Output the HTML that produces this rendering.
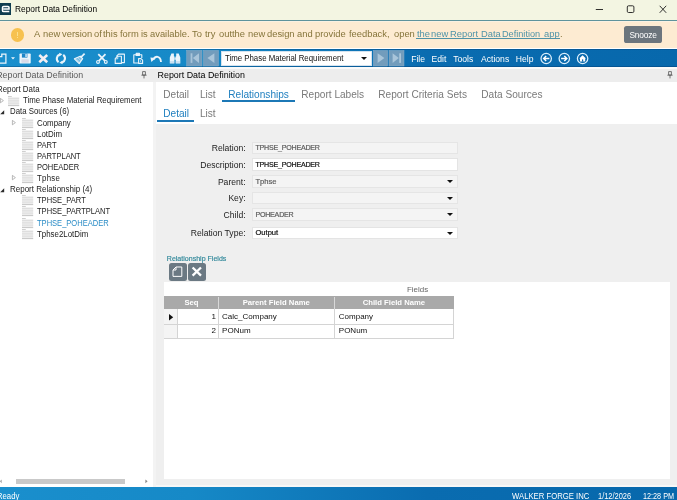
<!DOCTYPE html>
<html><head><meta charset="utf-8"><title>Report Data Definition</title>
<style>
*{box-sizing:border-box;margin:0;padding:0}
html,body{width:677px;height:500px;overflow:hidden;background:#efefef;font-family:"Liberation Sans",sans-serif;color:#222}
.a{position:absolute;white-space:nowrap}
svg{position:absolute;overflow:visible}
#titlebar{left:0;top:0;width:677px;height:20px;background:#f3f5e2}
#tline{left:0;top:20px;width:677px;height:1px;background:#5f939c}
#banner{left:0;top:21px;width:677px;height:27px;background:#fdebd2;border-top:1px solid #fbf1e2}
#toolbar{left:0;top:48.7px;width:677px;height:18.5px;background:linear-gradient(90deg,#1a8fcd 0%,#1689c7 28%,#0a6cb0 63%,#0768ac 100%)}
#status{left:0;top:487.4px;width:677px;height:12.6px;background:linear-gradient(90deg,#1a8fcd 0%,#1689c7 28%,#0a6cb0 63%,#0768ac 100%)}
.tt{font-size:8.33px;line-height:10px;color:#111}
.bn{font-size:9.7px;line-height:12px;color:#85743a;transform:scaleX(.966);transform-origin:0 50%}
.bn.lk{color:#4f93a8}
.mn{font-size:8.6px;line-height:10px;color:#fff}
.tr{font-size:7.85px;line-height:10px;color:#222}
.tab{font-size:10.1px;line-height:12px;color:#7a7a7a}
.tab.on{color:#1f7fbf}
.ul{background:#1c78b6;height:2.1px}
.lb{font-size:8.6px;line-height:10px;color:#222;text-align:right;width:90px;left:155.6px}
.fd{left:252px;width:206px;height:12.8px;border:1px solid #e5e5e5;background:#f4f4f4;-webkit-text-stroke:.2px;font-size:7.6px;line-height:10.8px;padding-left:2.4px;padding-top:.8px;color:#5c5c5c}
.fd.w{background:#fff;color:#111;border-color:#e4e4e4}
.dd{width:0;height:0;border-left:3.2px solid transparent;border-right:3.2px solid transparent;border-top:3.3px solid #111}
.gh{top:296.2px;height:12.5px;background:#a9a9a9;color:#fff;font-weight:bold;font-size:7.7px;line-height:13px;text-align:center}
.gc{font-size:8px;line-height:14px;color:#111}
</style></head><body><div id="root" style="position:absolute;left:0;top:0;width:677px;height:500px;will-change:transform">
<!-- title bar -->
<div class="a" id="titlebar"></div>
<div class="a" style="left:0;top:3.4px;width:10.9px;height:11.2px;background:#0f3d50"></div>
<svg style="left:0;top:3px" width="11" height="11.5" viewBox="0 0 11 11.5"><path d="M3.4 6.1H9V4.4Q9 3.4 8 3.4H3.6Q2.5 3.4 2.5 4.5V7.5Q2.5 8.6 3.6 8.6H9.3" fill="none" stroke="#fff" stroke-width="1.5"/></svg>
<div class="a tt" style="left:14.5px;top:4.2px;font-size:9.3px;transform:scaleX(.898);transform-origin:0 0;color:#000">Report Data Definition</div>
<svg style="left:595px;top:4px" width="75" height="11" viewBox="0 0 75 11"><g fill="none" stroke="#1b1b1b" stroke-width="0.9"><path d="M0.8 5.5H8"/><rect x="32.3" y="1.8" width="6.6" height="6.7" rx="1.2"/><path d="M64.7 1.8L71.2 8.8M71.2 1.8L64.7 8.8"/></g></svg>
<div class="a" id="tline"></div>
<!-- banner -->
<div class="a" id="banner"></div>
<div class="a" style="left:10.5px;top:27.8px;width:13.8px;height:13.8px;border-radius:50%;background:#f7c14f"></div>
<div class="a" style="left:16.7px;top:31.6px;width:1.4px;height:4.4px;background:#fbe08e"></div>
<div class="a" style="left:16.7px;top:36.9px;width:1.4px;height:1.3px;background:#fbe08e"></div>
<span class="a bn" style="left:34.4px;top:28.3px">A</span>
<span class="a bn" style="left:42.7px;top:28.3px">new</span>
<span class="a bn" style="left:61.6px;top:28.3px">version</span>
<span class="a bn" style="left:94.4px;top:28.3px">of</span>
<span class="a bn" style="left:103.3px;top:28.3px">this</span>
<span class="a bn" style="left:120.1px;top:28.3px">form</span>
<span class="a bn" style="left:140.8px;top:28.3px">is</span>
<span class="a bn" style="left:149.6px;top:28.3px">available.</span>
<span class="a bn" style="left:192.2px;top:28.3px">To</span>
<span class="a bn" style="left:205.4px;top:28.3px">try</span>
<span class="a bn" style="left:218.5px;top:28.3px">out</span>
<span class="a bn" style="left:232.4px;top:28.3px">the</span>
<span class="a bn" style="left:248.1px;top:28.3px">new</span>
<span class="a bn" style="left:267.3px;top:28.3px">design</span>
<span class="a bn" style="left:297.4px;top:28.3px">and</span>
<span class="a bn" style="left:315.1px;top:28.3px">provide</span>
<span class="a bn" style="left:349.1px;top:28.3px">feedback,</span>
<span class="a bn" style="left:393.7px;top:28.3px">open</span>
<span class="a bn lk" style="left:416.6px;top:28.3px">the</span>
<span class="a bn lk" style="left:430.8px;top:28.3px">new</span>
<span class="a bn lk" style="left:450.4px;top:28.3px">Report</span>
<span class="a bn lk" style="left:481.0px;top:28.3px">Data</span>
<span class="a bn lk" style="left:501.8px;top:28.3px;transform:scaleX(.945)">Definition</span>
<span class="a bn lk" style="left:543.8px;top:28.3px">app</span>
<span class="a bn" style="left:559.9px;top:28.3px">.</span>
<div class="a" style="left:416.1px;top:38.1px;width:143.6px;height:.8px;background:#4f93a8"></div>
<div class="a" style="left:624px;top:26px;width:38px;height:16.8px;border-radius:2.6px;background:#6c757d"></div>
<div class="a" style="left:624px;top:29.6px;width:38px;color:#fff;font-size:8.4px;line-height:10px;text-align:center;letter-spacing:-.2px">Snooze</div>
<div class="a" style="left:0;top:48px;width:677px;height:.7px;background:#fff"></div>
<!-- toolbar -->
<div class="a" id="toolbar"></div>
<div class="a" style="left:0;top:48.7px;width:677px;height:.8px;background:rgba(0,40,90,.25)"></div>
<div class="a" style="left:0;top:66.4px;width:677px;height:.8px;background:rgba(0,40,90,.3)"></div>
<svg id="tbicons" style="left:0;top:0" width="677" height="500" viewBox="0 0 677 500">
<path d="M-1 56.7H1.8V54.2H5.9V63H-1" fill="none" stroke="#eaf4fb" stroke-width="1.25"/>
<path d="M11 57.2H15L13 59.4z" fill="#eaf4fb"/>
<path d="M20.3 53.5H29.9Q30.7 53.5 30.7 54.3V62.7Q30.7 63.5 29.9 63.5H20.3Q19.5 63.5 19.5 62.7V54.3Q19.5 53.5 20.3 53.5z" fill="#eaf4fb"/>
<rect x="21.9" y="53.5" width="5.5" height="4.1" fill="#1d86c7"/><rect x="25.4" y="54" width="1.3" height="3" fill="#eaf4fb"/><rect x="21.5" y="59.3" width="7.2" height="3.4" fill="#cfdcec"/><path d="M21.5 60.6H28.7M21.5 61.8H28.7" stroke="#e9d9e2" stroke-width=".5"/>
<path d="M39.3 55L47.2 62.3M47.2 55L39.3 62.3" stroke="#f3eef3" stroke-width="2.6" fill="none"/>
<g fill="none" stroke="#eaf4fb" stroke-width="2.1"><path d="M59.8 54.5A4.4 4.4 0 0 0 58.6 62.2"/><path d="M62 62.5A4.4 4.4 0 0 0 63.2 54.8"/></g>
<path d="M59.2 52.8L62.4 54.3L59.4 56.6z" fill="#eaf4fb"/><path d="M62.6 64.2L59.4 62.7L62.4 60.4z" fill="#eaf4fb"/>
<g stroke="#eaf4fb" fill="none" stroke-linejoin="round"><path d="M84.6 53.6L80.6 57.6" stroke-width="1.7"/><path d="M80.2 56.2L82.6 58.6L79.2 63.6L74.4 58.8z" stroke-width="1.2" fill="rgba(234,244,251,.45)"/><path d="M76.4 59.2L79.6 62.2M78 57.8L81 60.6" stroke-width=".6"/></g>
<g stroke="#eaf4fb" fill="none" stroke-width="1.8"><path d="M98.3 54.2L104.9 60.8M105.5 54.2L98.9 60.8"/><circle cx="98" cy="61.9" r="1.4" stroke-width="1.15"/><circle cx="105.8" cy="61.9" r="1.4" stroke-width="1.15"/></g>
<g stroke="#eaf4fb" fill="none" stroke-width="1.1" stroke-linejoin="round"><path d="M116.4 56.4L118.6 54.1H124.4V62.6H122"/><path d="M115.2 58.6L117.6 56.2H121.4V63.4H115.2z"/><path d="M117.8 56.4V58.8H115.4" stroke-width=".8"/></g>
<g stroke="#eaf4fb" fill="none" stroke-width="1.1" stroke-linejoin="round"><path d="M138 63H133.8V54.8H141.8V58"/><rect x="136.2" y="53.2" width="3.2" height="2.2" fill="#eaf4fb"/><path d="M138.6 58.6H141L142.6 60.2V63.4H138.6z"/><path d="M140.6 60.2V62" stroke-width=".7"/></g>
<path d="M153.4 59.6C155.4 55.6 160.4 55.6 161 62" stroke="#eaf4fb" stroke-width="1.9" fill="none"/><path d="M150.4 57.6L155.6 58L151.4 62z" fill="#eaf4fb"/>
<g fill="#eaf4fb"><path d="M171.4 53.5H173.9V56.2H174.4V63.4H169.8V57.6z"/><path d="M176.2 53.5H178.7L180.3 57.6V63.4H175.7V56.2H176.2z"/><rect x="174.4" y="57.4" width="1.4" height="2.4"/></g>
<path d="M169.8 62H180.3" stroke="#7fb6dc" stroke-width=".6"/>
<g fill="#729cbc" stroke="#86acc8" stroke-width=".5"><rect x="186.6" y="50.4" width="15.4" height="15.6"/><rect x="203.4" y="50.4" width="15.2" height="15.6"/><rect x="373.3" y="50.4" width="14.4" height="15.6"/><rect x="389" y="50.4" width="15" height="15.6"/></g>
<g fill="#a9c5da"><rect x="190.6" y="53.3" width="1.8" height="9.6"/><path d="M199 53.3V62.9L192.8 58.1z"/><path d="M214.4 53.3V62.9L207.4 58.1z"/><path d="M377.6 53.3V62.9L384.4 58.1z"/><path d="M392.6 53.3V62.9L398.8 58.1z"/><rect x="399.2" y="53.3" width="1.8" height="9.6"/></g>
<g fill="none" stroke="#d9eefc" stroke-width="1.25"><circle cx="546.2" cy="58.5" r="5.2"/><circle cx="564.3" cy="58.5" r="5.2"/><circle cx="582.6" cy="58.5" r="5.2"/></g>
<g fill="none" stroke="#fff" stroke-width="1.4"><path d="M549.4 58.5H543.8M546.2 55.9L543.6 58.5L546.2 61.1"/><path d="M561.1 58.5H566.7M564.3 55.9L566.9 58.5L564.3 61.1"/></g>
<path d="M579.2 58.6L582.6 55.2L586 58.6H585.2V61.6H580V58.6z" fill="#fff"/><rect x="582" y="59.4" width="1.2" height="2.2" fill="#0e66aa"/>
</svg>
<div class="a" style="left:220.7px;top:51px;width:150.9px;height:15px;background:#fff;border:1px solid #d5e3ef"></div>
<div class="a tr" style="left:225.4px;top:53.4px;color:#111;font-size:8.4px;transform:scaleX(.935);transform-origin:0 50%">Time Phase Material Requirement</div>
<div class="a dd" style="left:361.2px;top:56.8px"></div>
<div class="a mn" style="left:411.2px;top:54.4px">File</div>
<div class="a mn" style="left:431.6px;top:54.4px">Edit</div>
<div class="a mn" style="left:453.2px;top:54.4px">Tools</div>
<div class="a mn" style="left:481px;top:54.4px">Actions</div>
<div class="a mn" style="left:515.8px;top:54.4px">Help</div>
<!-- panel headers -->
<div class="a" style="left:0;top:67px;width:677px;height:1.5px;background:#fafafa"></div>
<div class="a" style="left:0;top:68.5px;width:677px;height:13.2px;background:#ededed"></div>
<div class="a" style="left:-3.8px;top:70px;font-size:8.85px;line-height:10px;color:#5a5a5a">Report Data Definition</div>
<div class="a" style="left:157.6px;top:70px;font-size:8.9px;line-height:10px;color:#000">Report Data Definition</div>
<svg style="left:141px;top:71px" width="6" height="8" viewBox="0 0 6 8"><path d="M1.6 .6H4.4V4H1.6zM.4 4.2H5.6M3 4.2V7.4" fill="none" stroke="#555" stroke-width=".8"/></svg>
<svg style="left:667px;top:71px" width="6" height="8" viewBox="0 0 6 8"><path d="M1.6 .6H4.4V4H1.6zM.4 4.2H5.6M3 4.2V7.4" fill="none" stroke="#555" stroke-width=".8"/></svg>
<!-- tree -->
<div class="a" id="tree" style="left:0;top:81.7px;width:152.5px;height:405.3px;background:#fff"></div>
<div class="a tr" style="left:-3.5px;top:83.9px;font-size:8.45px;color:#222;transform:scaleX(0.935);transform-origin:0 50%">Report Data</div>
<svg style="left:-0.4px;top:98.0px" width="4" height="5.2" viewBox="0 0 4 5.2"><path d="M.4 .4L3.4 2.6L.4 4.8z" fill="#fff" stroke="#9a9a9a" stroke-width=".7"/></svg>
<svg style="left:8.4px;top:95.5px" width="11.2" height="10" viewBox="0 0 11.2 10"><path d="M0 .5H3.8" stroke="#c9c9c9" stroke-width=".9"/><path d="M0 2.2H11.2M0 4.1H11.2M0 6H11.2M0 7.9H11.2" stroke="#cdcdcd" stroke-width=".95"/><path d="M0 9.6H11.2" stroke="#bdbdbd" stroke-width=".9"/></svg>
<div class="a tr" style="left:23.3px;top:95.0px;font-size:8.38px;color:#222;transform:scaleX(0.935);transform-origin:0 50%">Time Phase Material Requirement</div>
<svg style="left:-0.4px;top:109.7px" width="4.4" height="4.4" viewBox="0 0 4.4 4.4"><path d="M4.2 .2V4.2H.2z" fill="#2b2b2b"/></svg>
<div class="a tr" style="left:9.7px;top:106.1px;font-size:8.40px;color:#222;transform:scaleX(0.935);transform-origin:0 50%">Data Sources (6)</div>
<svg style="left:11.7px;top:120.2px" width="4" height="5.2" viewBox="0 0 4 5.2"><path d="M.4 .4L3.4 2.6L.4 4.8z" fill="#fff" stroke="#9a9a9a" stroke-width=".7"/></svg>
<svg style="left:21.7px;top:117.7px" width="11.2" height="10" viewBox="0 0 11.2 10"><path d="M0 .5H3.8" stroke="#c9c9c9" stroke-width=".9"/><path d="M0 2.2H11.2M0 4.1H11.2M0 6H11.2M0 7.9H11.2" stroke="#cdcdcd" stroke-width=".95"/><path d="M0 9.6H11.2" stroke="#bdbdbd" stroke-width=".9"/></svg>
<div class="a tr" style="left:36.5px;top:117.8px;font-size:8.45px;color:#222;transform:scaleX(0.935);transform-origin:0 50%">Company</div>
<svg style="left:21.7px;top:128.9px" width="11.2" height="10" viewBox="0 0 11.2 10"><path d="M0 .5H3.8" stroke="#c9c9c9" stroke-width=".9"/><path d="M0 2.2H11.2M0 4.1H11.2M0 6H11.2M0 7.9H11.2" stroke="#cdcdcd" stroke-width=".95"/><path d="M0 9.6H11.2" stroke="#bdbdbd" stroke-width=".9"/></svg>
<div class="a tr" style="left:36.5px;top:129.0px;font-size:8.45px;color:#222;transform:scaleX(0.935);transform-origin:0 50%">LotDim</div>
<svg style="left:21.7px;top:140.1px" width="11.2" height="10" viewBox="0 0 11.2 10"><path d="M0 .5H3.8" stroke="#c9c9c9" stroke-width=".9"/><path d="M0 2.2H11.2M0 4.1H11.2M0 6H11.2M0 7.9H11.2" stroke="#cdcdcd" stroke-width=".95"/><path d="M0 9.6H11.2" stroke="#bdbdbd" stroke-width=".9"/></svg>
<div class="a tr" style="left:36.5px;top:140.1px;font-size:8.55px;color:#222;transform:scaleX(0.889);transform-origin:0 50%">PART</div>
<svg style="left:21.7px;top:151.2px" width="11.2" height="10" viewBox="0 0 11.2 10"><path d="M0 .5H3.8" stroke="#c9c9c9" stroke-width=".9"/><path d="M0 2.2H11.2M0 4.1H11.2M0 6H11.2M0 7.9H11.2" stroke="#cdcdcd" stroke-width=".95"/><path d="M0 9.6H11.2" stroke="#bdbdbd" stroke-width=".9"/></svg>
<div class="a tr" style="left:36.5px;top:151.2px;font-size:8.49px;color:#222;transform:scaleX(0.889);transform-origin:0 50%">PARTPLANT</div>
<svg style="left:21.7px;top:162.3px" width="11.2" height="10" viewBox="0 0 11.2 10"><path d="M0 .5H3.8" stroke="#c9c9c9" stroke-width=".9"/><path d="M0 2.2H11.2M0 4.1H11.2M0 6H11.2M0 7.9H11.2" stroke="#cdcdcd" stroke-width=".95"/><path d="M0 9.6H11.2" stroke="#bdbdbd" stroke-width=".9"/></svg>
<div class="a tr" style="left:36.5px;top:162.3px;font-size:8.46px;color:#222;transform:scaleX(0.889);transform-origin:0 50%">POHEADER</div>
<svg style="left:11.7px;top:175.3px" width="4" height="5.2" viewBox="0 0 4 5.2"><path d="M.4 .4L3.4 2.6L.4 4.8z" fill="#fff" stroke="#9a9a9a" stroke-width=".7"/></svg>
<svg style="left:21.7px;top:172.8px" width="11.2" height="10" viewBox="0 0 11.2 10"><path d="M0 .5H3.8" stroke="#c9c9c9" stroke-width=".9"/><path d="M0 2.2H11.2M0 4.1H11.2M0 6H11.2M0 7.9H11.2" stroke="#cdcdcd" stroke-width=".95"/><path d="M0 9.6H11.2" stroke="#bdbdbd" stroke-width=".9"/></svg>
<div class="a tr" style="left:36.5px;top:172.9px;font-size:8.40px;color:#222;letter-spacing:.3px;transform:scaleX(0.935);transform-origin:0 50%">Tphse</div>
<svg style="left:-0.4px;top:187.5px" width="4.4" height="4.4" viewBox="0 0 4.4 4.4"><path d="M4.2 .2V4.2H.2z" fill="#2b2b2b"/></svg>
<div class="a tr" style="left:9.7px;top:183.9px;font-size:8.56px;color:#222;transform:scaleX(0.935);transform-origin:0 50%">Report Relationship (4)</div>
<svg style="left:21.7px;top:195.1px" width="11.2" height="10" viewBox="0 0 11.2 10"><path d="M0 .5H3.8" stroke="#c9c9c9" stroke-width=".9"/><path d="M0 2.2H11.2M0 4.1H11.2M0 6H11.2M0 7.9H11.2" stroke="#cdcdcd" stroke-width=".95"/><path d="M0 9.6H11.2" stroke="#bdbdbd" stroke-width=".9"/></svg>
<div class="a tr" style="left:36.5px;top:195.1px;font-size:8.49px;color:#222;transform:scaleX(0.889);transform-origin:0 50%">TPHSE_PART</div>
<svg style="left:21.7px;top:206.2px" width="11.2" height="10" viewBox="0 0 11.2 10"><path d="M0 .5H3.8" stroke="#c9c9c9" stroke-width=".9"/><path d="M0 2.2H11.2M0 4.1H11.2M0 6H11.2M0 7.9H11.2" stroke="#cdcdcd" stroke-width=".95"/><path d="M0 9.6H11.2" stroke="#bdbdbd" stroke-width=".9"/></svg>
<div class="a tr" style="left:36.5px;top:206.2px;font-size:8.49px;color:#222;transform:scaleX(0.889);transform-origin:0 50%">TPHSE_PARTPLANT</div>
<svg style="left:21.7px;top:217.8px" width="11.2" height="10" viewBox="0 0 11.2 10"><path d="M0 .5H3.8" stroke="#c9c9c9" stroke-width=".9"/><path d="M0 2.2H11.2M0 4.1H11.2M0 6H11.2M0 7.9H11.2" stroke="#cdcdcd" stroke-width=".95"/><path d="M0 9.6H11.2" stroke="#bdbdbd" stroke-width=".9"/></svg>
<div class="a tr" style="left:36.5px;top:217.8px;font-size:8.49px;color:#2a8cc6;transform:scaleX(0.889);transform-origin:0 50%">TPHSE_POHEADER</div>
<svg style="left:21.7px;top:228.8px" width="11.2" height="10" viewBox="0 0 11.2 10"><path d="M0 .5H3.8" stroke="#c9c9c9" stroke-width=".9"/><path d="M0 2.2H11.2M0 4.1H11.2M0 6H11.2M0 7.9H11.2" stroke="#cdcdcd" stroke-width=".95"/><path d="M0 9.6H11.2" stroke="#bdbdbd" stroke-width=".9"/></svg>
<div class="a tr" style="left:36.5px;top:228.9px;font-size:8.45px;color:#222;transform:scaleX(0.935);transform-origin:0 50%">Tphse2LotDim</div>
<div class="a" style="left:15.8px;top:479px;width:109.2px;height:4.6px;background:#c9c9c9"></div>
<svg style="left:0;top:479px" width="150" height="5" viewBox="0 0 150 5"><path d="M1.6 .4L0 2.3L1.6 4.2z" fill="#999"/><path d="M145.4 .4L147.6 2.3L145.4 4.2z" fill="#888"/></svg>
<!-- right panel -->
<div class="a" style="left:152.5px;top:81.7px;width:524.5px;height:42.5px;background:#fff"></div>
<div class="a" style="left:152.5px;top:81.7px;width:3.7px;height:405.3px;background:#f3f3f3"></div>
<div class="a tab" style="left:163.3px;top:88.6px;transform:translateY(-.45px)">Detail</div>
<div class="a tab" style="left:199.9px;top:88.6px;transform:translateY(-.45px)">List</div>
<div class="a tab on" style="left:228.3px;top:88.6px;transform:translateY(-.45px)">Relationships</div>
<div class="a tab" style="left:301.3px;top:88.6px;transform:translateY(-.45px)">Report Labels</div>
<div class="a tab" style="left:378.3px;top:88.6px;transform:translateY(-.45px)">Report Criteria Sets</div>
<div class="a tab" style="left:481.3px;top:88.6px;transform:translateY(-.45px)">Data Sources</div>
<div class="a ul" style="left:222.4px;top:100.2px;width:72.4px"></div>
<div class="a tab on" style="left:163.3px;top:108.2px;transform:translateY(.4px)">Detail</div>
<div class="a tab" style="left:199.9px;top:108.2px;transform:translateY(.4px)">List</div>
<div class="a ul" style="left:157.4px;top:120px;width:36.4px"></div>
<div class="a lb" style="top:143.3px">Relation:</div>
<div class="a fd " style="top:141.7px;font-size:7.1px;letter-spacing:-.22px;">TPHSE_POHEADER</div>
<div class="a lb" style="top:159.9px">Description:</div>
<div class="a fd w" style="top:158.3px;font-size:7.1px;letter-spacing:-.22px;">TPHSE_POHEADER</div>
<div class="a lb" style="top:176.6px">Parent:</div>
<div class="a fd " style="top:175px;">Tphse</div>
<div class="a dd" style="left:447px;top:180.0px"></div>
<div class="a lb" style="top:193.2px">Key:</div>
<div class="a fd " style="top:191.6px;"></div>
<div class="a dd" style="left:447px;top:196.6px"></div>
<div class="a lb" style="top:209.8px">Child:</div>
<div class="a fd " style="top:208.2px;font-size:7.1px;letter-spacing:-.22px;">POHEADER</div>
<div class="a dd" style="left:447px;top:213.2px"></div>
<div class="a lb" style="top:228.2px">Relation Type:</div>
<div class="a fd w" style="top:226.6px;">Output</div>
<div class="a dd" style="left:447px;top:231.6px"></div>
<div class="a" style="left:166.8px;top:253.6px;font-size:7.05px;line-height:10px;color:#2f8799;-webkit-text-stroke:.15px">Relationship Fields</div>
<div class="a" style="left:168.7px;top:263px;width:18.3px;height:17.7px;border-radius:2.5px;background:#6b7983"></div>
<div class="a" style="left:188px;top:263px;width:18.2px;height:17.7px;border-radius:2.5px;background:#6b7983"></div>
<svg style="left:168.7px;top:263px" width="38" height="17.7" viewBox="0 0 38 17.7"><path d="M7 4H12.8V13.4H4V7zM7 4V7H4" fill="none" stroke="#fff" stroke-width="1" stroke-linejoin="round"/><path d="M23.6 4.5L32 12.7M32 4.5L23.6 12.7" stroke="#fff" stroke-width="2.3" fill="none"/></svg>
<div class="a" style="left:164.2px;top:282px;width:506.3px;height:197px;background:#fff"></div>
<div class="a" style="left:407px;top:284.5px;font-size:7.95px;line-height:10px;color:#666">Fields</div>
<div class="a gh" style="left:164.2px;width:289.5px"></div>
<div class="a gh" style="left:164.5px;width:53.9px;background:none">Seq</div>
<div class="a gh" style="left:218.4px;width:115.7px;background:none">Parent Field Name</div>
<div class="a gh" style="left:334.1px;width:119.6px;background:none">Child Field Name</div>
<div class="a" style="left:217.9px;top:296.5px;width:1px;height:12px;background:#d9d9d9"></div>
<div class="a" style="left:333.6px;top:296.5px;width:1px;height:12px;background:#d9d9d9"></div>
<div class="a" style="left:164.2px;top:308.7px;width:13.2px;height:29.8px;background:#f4f4f4"></div>
<div class="a" style="left:164.2px;top:323.9px;width:289.9px;height:1px;background:#d4d4d4"></div>
<div class="a" style="left:164.2px;top:338.2px;width:289.9px;height:1px;background:#d4d4d4"></div>
<div class="a" style="left:177.2px;top:308.5px;width:1px;height:30.5px;background:#d4d4d4"></div>
<div class="a" style="left:217.9px;top:308.5px;width:1px;height:30.5px;background:#d4d4d4"></div>
<div class="a" style="left:333.6px;top:308.5px;width:1px;height:30.5px;background:#d4d4d4"></div>
<div class="a" style="left:453.2px;top:308.5px;width:1px;height:30.5px;background:#d4d4d4"></div>
<svg style="left:169px;top:313.6px" width="4.2" height="6.6" viewBox="0 0 4.2 6.6"><path d="M0 0L4.2 3.3L0 6.6z" fill="#111"/></svg>
<div class="a gc" style="left:178px;top:309.5px;width:38px;text-align:right">1</div>
<div class="a gc" style="left:222.1px;top:309.5px">Calc_Company</div>
<div class="a gc" style="left:338.8px;top:309.5px">Company</div>
<div class="a gc" style="left:178px;top:324px;width:38px;text-align:right">2</div>
<div class="a gc" style="left:222.1px;top:324px">PONum</div>
<div class="a gc" style="left:338.8px;top:324px">PONum</div>
<div class="a" style="left:156.2px;top:485.4px;width:520.8px;height:2px;background:#f7f7f7"></div>
<!-- status -->
<div class="a" id="status"></div>
<div class="a mn" style="left:-3.3px;top:490.6px;font-size:8.3px;transform:scaleX(.93);transform-origin:0 0">Ready</div>
<div class="a mn" style="left:512px;top:490.6px;font-size:8.3px;transform:scaleX(.93);transform-origin:0 0">WALKER FORGE INC</div>
<div class="a mn" style="left:597.6px;top:490.6px;font-size:8.3px;transform:scaleX(.897);transform-origin:0 0">1/12/2026</div>
<div class="a mn" style="left:643px;top:490.6px;font-size:8.3px;transform:scaleX(.873);transform-origin:0 0">12:28 PM</div>
</div></body></html>
